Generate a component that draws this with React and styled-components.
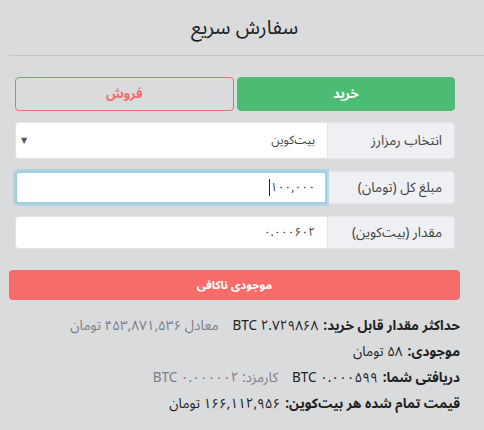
import React from "react";
import styled, { createGlobalStyle } from "styled-components";

const Global = createGlobalStyle`
  html, body { margin: 0; padding: 0; background: #dadbdd; }
  body { font-family: "Noto Sans Arabic", "DejaVu Sans", sans-serif; color: #222; }
`;

const Page = styled.div`
  direction: rtl;
  width: 484px;
  height: 430px;
  box-sizing: border-box;
  padding: 0 24px 0 0;
  overflow: hidden;
`;

const Header = styled.div`
  height: 56px;
  display: flex;
  align-items: center;
  justify-content: center;
  border-bottom: 1px solid #c6c7c9;
  margin-right: -24px;
  margin-left: 9px;
  box-sizing: border-box;
`;

const Title = styled.h2`
  margin: 0;
  font-size: 20px;
  font-weight: 400;
  color: #222;
  line-height: 24px;
  transform: translateX(-2px);
`;

const Body = styled.div`
  padding: 21px 0 0 9px;
`;

const Form = styled.div`
  margin: 0 5px 0 6px;
  display: flex;
  flex-direction: column;
  gap: 12px;
`;

const Tabs = styled.div`
  display: flex;
  gap: 3px;
  margin-bottom: -1px;
`;

const Tab = styled.button`
  flex: 1;
  height: 34px;
  border-radius: 4px;
  font-family: inherit;
  font-weight: 700;
  font-size: 13px;
  cursor: pointer;
  border: 1px solid ${(p) => (p.$active ? "#4cbc74" : "#f26b6c")};
  background: ${(p) => (p.$active ? "#4cbc74" : "transparent")};
  color: ${(p) => (p.$active ? "#fff" : "#f36b6b")};
`;

const Group = styled.div`
  display: flex;
  height: ${(p) => p.$h || 33}px;
`;

const Addon = styled.div`
  width: 128px;
  flex: none;
  box-sizing: border-box;
  background: #eef0f3;
  border: 1px solid #e3e5e8;
  border-radius: 0 4px 4px 0;
  display: flex;
  align-items: center;
  padding-right: 12px;
  font-size: 13.5px;
  color: #444;
`;

const Field = styled.div`
  flex: 1;
  box-sizing: border-box;
  background: #fff;
  border: ${(p) => (p.$focus ? "2px solid #9ed2e4" : "1px solid #e3e5e8")};
  border-right: ${(p) => (p.$focus ? "2px solid #9ed2e4" : "none")};
  border-radius: 4px 0 0 4px;
  box-shadow: ${(p) => (p.$focus ? "0 0 0 2px rgba(150,200,220,0.55)" : "none")};
  display: flex;
  align-items: center;
  padding: 0 ${(p) => (p.$focus ? 10 : 12)}px 0 5px;
  font-size: 12.5px;
  color: #444;
`;

const Value = styled.span`
  flex: 1;
  font-size: 12px;
`;

const Caret = styled.span`
  display: inline-block;
  width: 1px;
  height: 17px;
  background: #222;
  vertical-align: middle;
  margin-right: 1px;
`;

const Arrow = styled.span`
  font-size: 8px;
  color: #555;
`;

const Alert = styled.div`
  margin-top: 21px;
  height: 30px;
  border-radius: 4px;
  background: #f86b6b;
  color: #fff;
  font-weight: 700;
  font-size: 11.5px;
  display: flex;
  align-items: center;
  justify-content: center;
`;

const Info = styled.div`
  margin-top: 13px;
  display: flex;
  flex-direction: column;
  font-size: 13.5px;
`;

const Line = styled.div`
  height: 26px;
  line-height: 18px;
  display: flex;
  align-items: center;
  gap: 5px;
  white-space: nowrap;
  color: #222;
`;

const Label = styled.b`
  font-weight: 700;
`;

const Amount = styled.span`
  unicode-bidi: isolate;
`;

const Muted = styled.span`
  color: #7b7e86;
  margin-right: 9px;
  unicode-bidi: isolate;
`;

export default function App() {
  return (
    <>
      <Global />
      <Page>
        <Header>
          <Title>سفارش سریع</Title>
        </Header>
        <Body>
          <Form>
            <Tabs>
              <Tab $active>خرید</Tab>
              <Tab>فروش</Tab>
            </Tabs>
            <Group $h={37}>
              <Addon>انتخاب رمزارز</Addon>
              <Field>
                <Value>بیت‌کوین</Value>
                <Arrow>▼</Arrow>
              </Field>
            </Group>
            <Group>
              <Addon>مبلغ کل (تومان)</Addon>
              <Field $focus>
                <Value>
                  ۱۰۰,۰۰۰
                  <Caret />
                </Value>
              </Field>
            </Group>
            <Group>
              <Addon>مقدار (بیت‌کوین)</Addon>
              <Field>
                <Value>۰.۰۰۰۶۰۲</Value>
              </Field>
            </Group>
          </Form>
          <Alert>موجودی ناکافی</Alert>
          <Info>
            <Line>
              <Label>حداکثر مقدار قابل خرید:</Label>
              <Amount>۲.۷۲۹۸۶۸ BTC</Amount>
              <Muted>معادل ۴۵۳,۸۷۱,۵۳۶ تومان</Muted>
            </Line>
            <Line>
              <Label>موجودی:</Label>
              <Amount>۵۸ تومان</Amount>
            </Line>
            <Line>
              <Label>دریافتی شما:</Label>
              <Amount>۰.۰۰۰۵۹۹ BTC</Amount>
              <Muted>کارمزد: ۰.۰۰۰۰۰۲ BTC</Muted>
            </Line>
            <Line>
              <Label>قیمت تمام شده هر بیت‌کوین:</Label>
              <Amount>۱۶۶,۱۱۲,۹۵۶ تومان</Amount>
            </Line>
          </Info>
        </Body>
      </Page>
    </>
  );
}
